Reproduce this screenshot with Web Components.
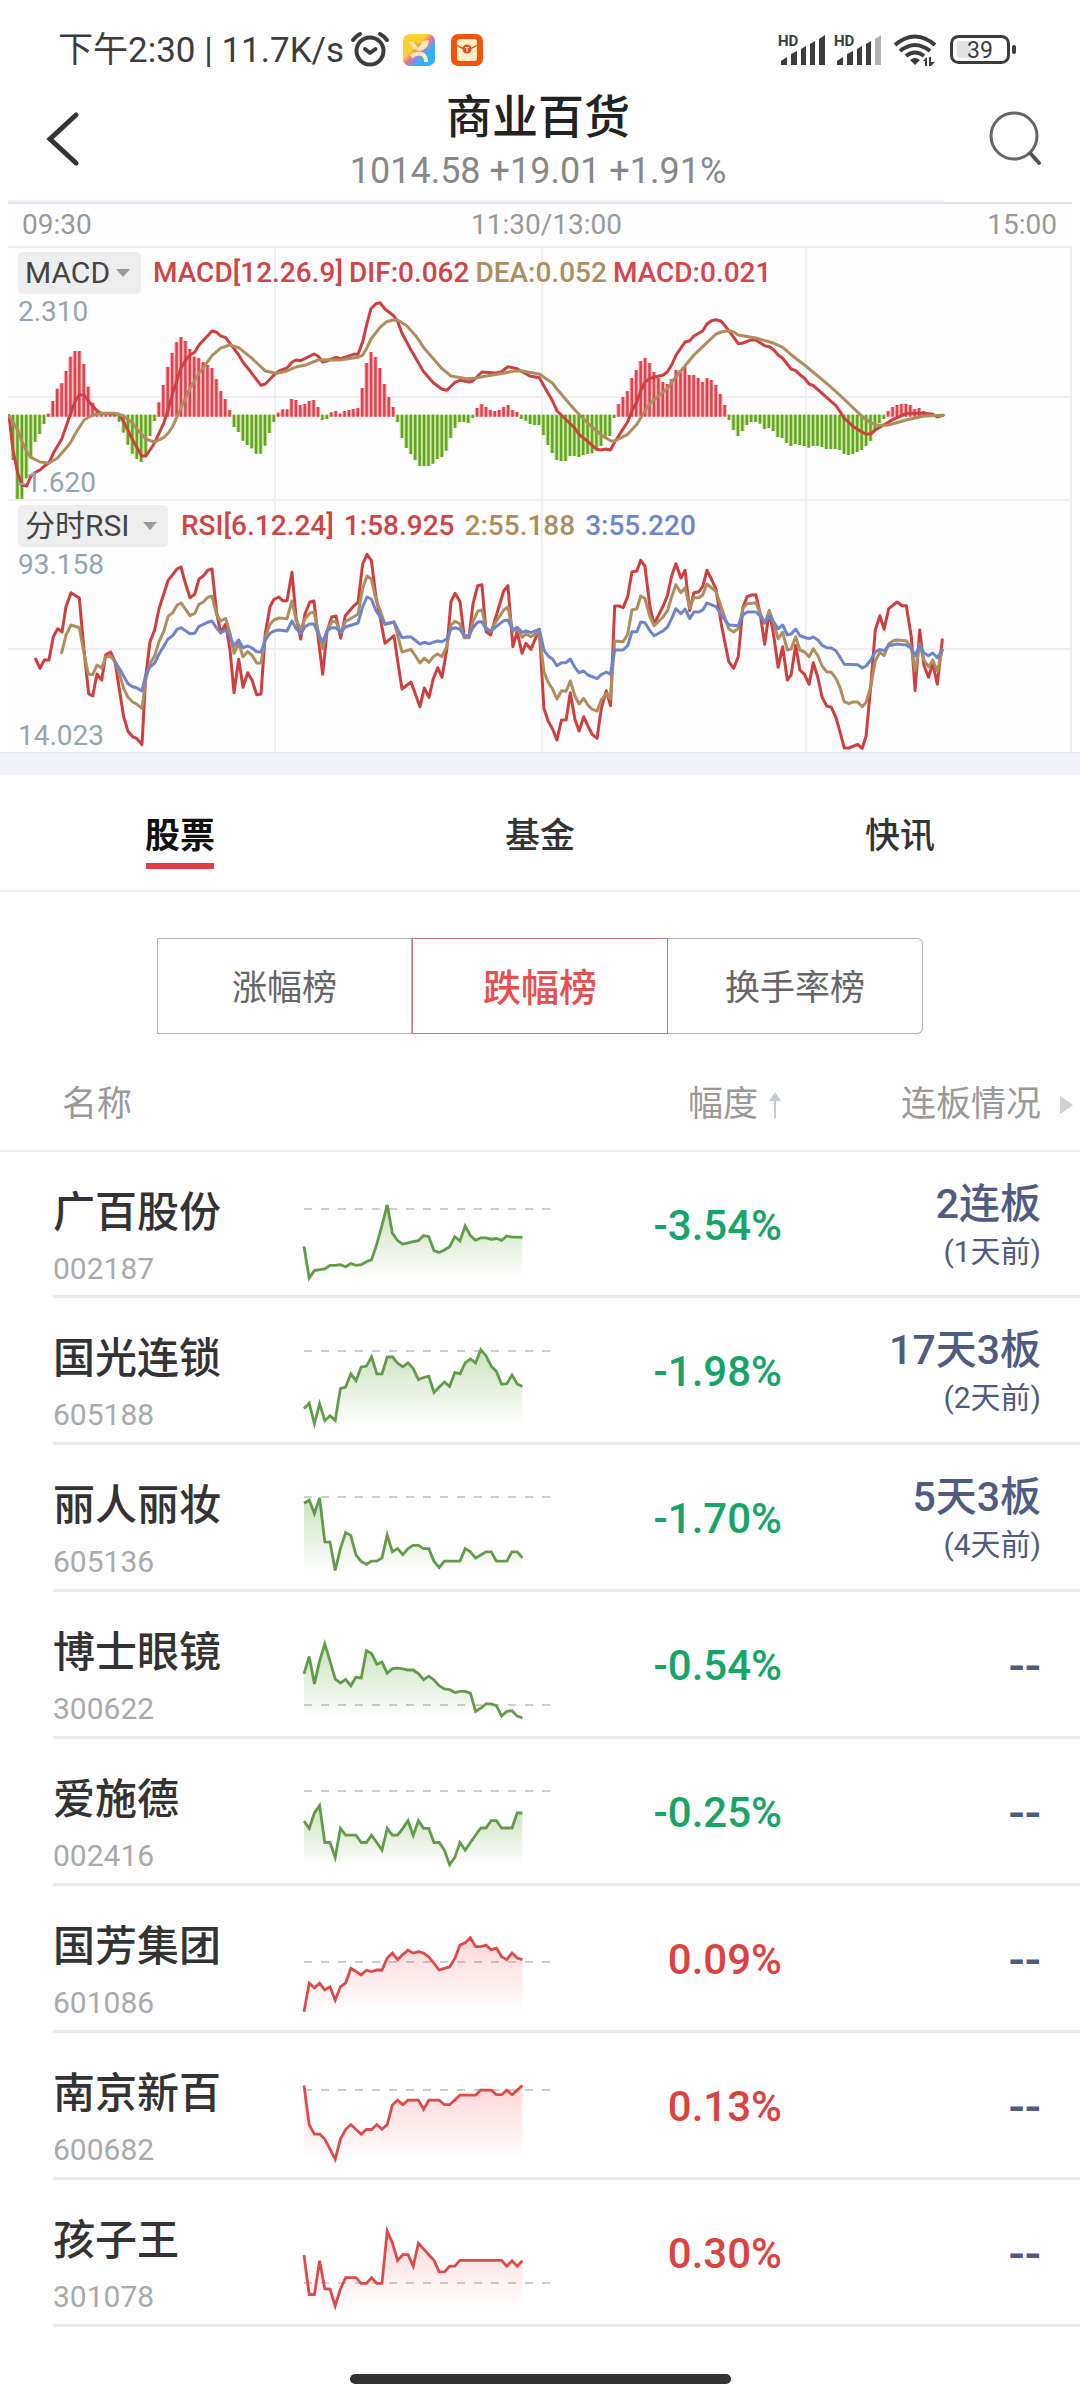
<!DOCTYPE html>
<html lang="zh-CN">
<head>
<meta charset="utf-8">
<meta name="viewport" content="width=device-width, initial-scale=1">
<title>商业百货</title>
<style>
body { margin: 0; background: #fefefe; font-family: Roboto, "Noto Sans CJK SC", sans-serif; color: #333; }
</style>
</head>
<body>
<sector-page></sector-page>

<script>
const define = (name, html, setup) => {
  const tpl = document.createElement('template');
  tpl.innerHTML = '<style>*{box-sizing:border-box}button,select{font:inherit;color:inherit;background:none;border:0;margin:0;padding:0;appearance:none}svg{display:block}</style>' + html;
  customElements.define(name, class extends HTMLElement {
    constructor() {
      super();
      this.attachShadow({ mode: 'open' }).append(tpl.content.cloneNode(true));
    }
    connectedCallback() { if (setup) setup(this, this.shadowRoot); }
  });
};

/* ---------- status bar ---------- */
define('status-bar', `
<style>
:host { display: flex; align-items: center; justify-content: space-between; box-sizing: border-box; height: 72px; padding: 30px 62px 0 58px; color: #3c3c3c; font-size: 35px; line-height: 42px; }
div { display: flex; align-items: center; }
.l svg { margin-left: 6px; }
text { font-family: Roboto, sans-serif; fill: #3c3c3c; }
</style>
<div class="l"><span>下午2:30 | 11.7K/s</span>
<svg width="136" height="40" viewBox="350 32 136 40">
  <g fill="none" stroke="#3c3c3c" stroke-width="4" stroke-linecap="round" stroke-linejoin="round">
    <circle cx="370" cy="52" r="13.5"/><path d="M365 50l5 4 5.500-4M353 41q3-4 7-6M387 41q-3-4-7-6"/>
  </g>
  <defs><linearGradient id="a" x1="0" y1="0" x2="1" y2="1"><stop offset=".38" stop-color="#ffd12e"/><stop offset=".5" stop-color="#ee6f8c"/><stop offset=".58" stop-color="#8d8be0"/><stop offset=".7" stop-color="#2fb4f3"/></linearGradient></defs>
  <rect x="403" y="35" width="32" height="32" rx="7" fill="url(#a)"/>
  <path d="M410 43q4 1 8 4 5-5 10-5-1 8-8 9-7-1-10-8z" fill="#ffe9b8" stroke="#fbe0a0" stroke-width="2" stroke-linejoin="round"/>
  <path d="M411 58q5-5 11-3 4 2 4 8" fill="none" stroke="#ffe9b8" stroke-width="4"/>
  <path d="M415 43l3 4 3-3" fill="none" stroke="#f3a23c" stroke-width="2"/>
  <rect x="451" y="35" width="32" height="32" rx="7" fill="#f2540c"/>
  <rect x="457" y="40" width="20" height="22" rx="3" fill="#ffedc4"/>
  <path d="M457 46q10 8 20 0" fill="none" stroke="#d8541c" stroke-width="1.500"/>
  <circle cx="467" cy="50" r="4.500" fill="#d8541c"/><path d="M465 48.500h4M467 48.500v4" stroke="#fff" stroke-width="1.200"/>
</svg></div>
<svg width="240" height="40" viewBox="778 32 240 40">
  <text x="778" y="47" font-size="15" font-weight="700">HD</text>
  <text x="834" y="47" font-size="15" font-weight="700">HD</text>
  <g fill="#3c3c3c">
    <path d="M781 66v-4l6-4v8zM791 66v-11l6-3v14zM801 66v-16l5-3v19zM810 66v-21l5-3v24zM819 66v-26l6-4v30z"/>
    <path d="M837 66v-4l6-4v8zM847 66v-11l6-3v14zM857 66v-16l5-3v19zM866 66v-21l5-3v24z"/>
    <path d="M875 66v-26l6-4v30z" fill="#b2b2b2"/>
    <path d="M915 66l-5-5q5-4 10 0z"/>
    <path d="M923 62l4-4v9h-2v-5zM929 58h2v5h4l-4 4h-2z"/>
  </g>
  <g fill="none" stroke="#3c3c3c" stroke-width="4">
    <path d="M895 46q20-17 40 0M900 52q15-12 30 0M906 57q9-7 18 0"/>
  </g>
  <rect x="957" y="42" width="14" height="17" rx="2" fill="#e2e2e2"/>
  <rect x="951.500" y="37.500" width="57" height="26" rx="7" fill="none" stroke="#3c3c3c" stroke-width="3"/>
  <rect x="1012" y="46" width="4" height="9" rx="2" fill="#3c3c3c"/>
  <text x="980" y="59" font-size="23" text-anchor="middle">39</text>
</svg>`);

/* ---------- title bar ---------- */
define('nav-bar', `
<style>
:host { display: flex; justify-content: space-between; box-sizing: border-box; height: 128px; padding: 0 44px 0 40px; }
button { height: 134px; width: 48px; }
.t { text-align: center; padding-top: 15px; }
h1 { margin: 0; font-size: 46px; line-height: 60px; font-weight: 500; color: #222; }
p { margin: 0; font-size: 36px; line-height: 48px; color: #888; }
</style>
<button aria-label="返回"><svg width="48" height="60" viewBox="40 109 48 60"><path d="M76 115L50 139l26 24" fill="none" stroke="#333" stroke-width="5" stroke-linecap="round"/></svg></button>
<div class="t"><h1><slot name="title"></slot></h1><p><slot></slot></p></div>
<button aria-label="搜索"><svg width="54" height="60" viewBox="988 109 54 60"><circle cx="1014" cy="136" r="23" fill="none" stroke="#666" stroke-width="3"/><path d="M1031 154l8 9" stroke="#555" stroke-width="4" stroke-linecap="round"/></svg></button>`);

/* ---------- time axis ---------- */
define('time-axis', `
<style>
:host { display: block; margin: 0 8px; background: #fdfdfd; }
.e { height: 2px; width: 88%; background: #edf2fa; }
.r { border-top: 2px solid #e3e7ec; display: grid; grid-template-columns: 1fr auto 1fr; padding: 0 15px 0 14px; font-size: 28px; line-height: 42px; color: #999; }
.r span:nth-child(2) { padding-left: 14px; }
.r span:last-child { text-align: right; }
</style>
<div class="e"></div><div class="r"><span>09:30</span><span>11:30/13:00</span><span>15:00</span></div>`);

/* ---------- indicator panel ---------- */
define('indicator-panel', `
<style>
:host { display: grid; height: 253px; margin: 0 8px; background: #fdfdfd; font-size: 28px; }
:host > * { grid-area: 1 / 1; min-width: 0; }
* { min-width: 0; }
svg.c, .o { grid-area: 1 / 1; }
.o { display: flex; flex-direction: column; align-items: flex-start; padding: 6px 0 0 10px; }
.g { display: flex; align-items: center; gap: var(--gap); line-height: 42px; font-weight: 500; height: 42px; white-space: nowrap; }
label { display: grid; align-items: center; background: #eee; border-radius: 5px; margin-right: var(--lead); font-weight: 400; color: #444; font-size: 30px; }
label > * { grid-area: 1 / 1; }
select { width: var(--chip); height: 42px; padding-left: 7px; line-height: 42px; }
label svg { justify-self: end; margin-right: 11px; pointer-events: none; }
.v { color: #95a5b0; line-height: 32px; }
.hi { padding-top: 2px; }
.lo { margin-top: auto; }
svg.c { width: 100%; height: 253px; }
</style>
<svg class="c" preserveAspectRatio="none"></svg>
<div class="o">
  <div class="g"><label><select aria-label="指标"></select><svg width="14" height="8" viewBox="0 0 14 8"><path d="M0 0h14L7 8z" fill="#999"/></svg></label><slot></slot></div>
  <span class="v hi"></span><span class="v lo"></span>
</div>`, (el, root) => {
  const d = CHARTS[el.getAttribute('kind')];
  root.querySelector('select').innerHTML = '<option>' + el.getAttribute('name') + '</option>';
  root.querySelector('.hi').textContent = el.getAttribute('hi');
  root.querySelector('.lo').textContent = el.getAttribute('lo');
  const svg = root.querySelector('.c');
  svg.setAttribute('viewBox', `8 ${d.top} 1064 253`);
  let s = `<g stroke="#efeff1" stroke-width="2"><path d="M275 ${d.top}v253M542 ${d.top}v253M806 ${d.top}v253M1071 ${d.top}v253M8 ${d.top + 1}h1064M8 ${d.mid}h1064"/></g>`;
  if (d.bars) {
    const x = i => 8.6 + 4.42 * i;
    let wide = '', thin = '';
    d.bars.forEach((v, i) => {
      const up = v < 527, y = d.y0 + v / 3, base = up ? 416.7 : 414.7;
      wide += `<path d="M${x(i)} ${base}V${y}" stroke="${up ? '#ffb0b4' : '#c2e895'}" stroke-width="4.5"/>`;
      thin += `<path d="M${x(i)} ${base}V${y}" stroke="${up ? '#d8434f' : '#65a126'}" stroke-width="2.4"/>`;
    });
    s += wide + thin;
  }
  for (const [color, a, b] of d.lines) {
    const p = (t, x0, k) => t.trim().split(' ').map(q => { const [x, y] = q.split(','); return (x0 + x / k).toFixed(1) + ',' + (d.y0 + y / 3).toFixed(1); }).join(' ');
    s += `<polyline fill="none" stroke="${color}" stroke-width="3" stroke-linejoin="round" stroke-linecap="round" points="${p(a, 0, 3)} ${p(b, 480, 2.613)}"/>`;
  }
  svg.innerHTML = s;
});

/* Two-part traces: the first list covers the morning, the second the afternoon. */
const CHARTS = {
  macd: { top: 246, mid: 397, y0: 240,
    bars: [527,660,781,781,715,655,606,582,552,521,483,446,430,393,350,333,333,372,440,488,508,518,521,516,516,545,578,614,641,657,666,645,588,543,487,435,381,339,306,291,303,327,350,354,366,375,384,417,453,477,510,561,576,602,615,625,641,641,617,579,546,518,508,508,477,480,495,492,483,480,501,540,537,517,513,521,513,510,507,504,444,369,336,351,384,432,471,501,546,594,624,642,660,678,678,678,671,657,651,632,594,564,546,546,549,534,504,492,501,510,513,510,501,495,510,516,537,542,552,555,555,585,615,639,660,663,663,648,648,651,645,642,640,630,618,597,588,534,492,471,453,414,390,363,354,369,396,414,426,432,417,390,390,381,405,405,414,426,414,420,435,462,495,540,570,588,573,555,546,546,551,567,564,573,591,594,609,618,612,615,618,623,618,618,621,627,627,627,630,642,645,642,636,630,618,603,570,549,537,513,501,495,492,492,495,507,504,513,519,521,524,523],
    lines: [
      ['#cf3f40', '27,527 39,630 53,700 66,735 80,738 93,708 107,697 120,690 133,678 147,668 160,640 185,597 198,560 212,520 225,485 238,465 252,465 265,483 278,497 291,513 304,520 357,523 371,545 398,600 425,648 438,648 464,608 477,580 491,550 504,510 518,460 531,420 543,385 557,360 570,345 584,337 597,315 636,273 650,277 662,288 677,293 690,310 716,345 729,367 743,384 783,436 796,432 822,405 837,393 861,384 876,367 888,360 902,362 942,342 954,348 968,366 980,363 1008,352 1022,356 1061,343 1074,343 1088,305 1101,250 1113,206 1128,191 1140,188 1155,207 1182,228 1194,247 1206,280 1233,330 1270,394 1300,428 1326,448 1341,451 1365,427 1380,421 1407,426 1419,422',
       '5,396 40,399 55,396 73,380 97,386 130,408 155,413 190,484 201,512 248,565 259,583 282,605 305,628 317,630 329,627 341,630 352,606 386,545 397,512 410,485 420,453 431,426 444,415 479,405 490,395 501,375 512,346 524,326 536,306 548,302 559,288 582,273 593,252 605,242 617,239 630,244 641,258 675,311 687,309 710,299 721,300 744,317 756,320 768,330 779,345 791,355 813,387 825,392 836,404 848,415 860,432 871,437 930,497 940,513 951,534 976,560 999,577 1009,582 1021,582 1033,570 1080,538 1114,520 1160,520 1183,523 1195,531 1210,526'],
      ['#ae8e5f', '27,527 53,570 66,605 80,635 93,652 120,666 147,669 172,655 198,625 212,607 225,583 252,540 278,525 304,520 344,520 370,527 398,550 411,567 438,598 464,606 491,593 504,580 518,560 531,530 570,445 597,400 636,347 662,324 690,315 716,323 756,355 796,393 830,400 861,393 888,381 920,374 954,360 980,359 1020,360 1074,352 1088,345 1101,323 1113,297 1140,262 1160,245 1182,239 1194,241 1220,257 1247,287 1273,325 1326,386 1353,408 1400,416 1430,414',
       '5,410 50,402 90,393 110,393 155,402 190,430 201,447 248,510 282,550 317,585 341,602 352,603 386,583 410,553 431,513 444,490 490,445 512,410 536,377 559,345 582,320 617,282 630,276 651,272 663,276 675,285 721,294 768,310 791,322 813,344 848,375 906,430 940,465 999,530 1021,548 1040,556 1065,556 1114,540 1160,528 1210,526']
    ] },
  rsi: { top: 499, mid: 649, y0: 490,
    lines: [
      ['#cf3f40', '107,507 120,535 133,510 147,510 160,440 173,416 186,426 198,350 213,308 238,324 252,480 266,612 278,618 291,552 305,570 317,494 332,486 345,515 371,680 384,724 398,740 411,746 426,764 437,560 450,455 464,420 477,356 504,272 531,237 543,231 557,283 570,323 584,313 597,267 610,258 623,241 636,237 650,370 662,428 677,402 690,480 702,608 716,508 729,592 743,548 756,570 770,614 783,612 796,430 810,350 822,328 837,321 848,332 861,332 876,247 888,380 902,447 915,372 929,337 942,333 954,440 968,553 981,425 995,381 1008,378 1022,445 1036,377 1061,348 1074,337 1088,222 1101,193 1114,211 1128,320 1140,380 1155,460 1182,437 1194,520 1206,597 1233,576 1260,650 1273,594 1287,622 1300,566 1313,533 1326,562 1340,480 1353,335 1365,310 1380,335 1393,442 1407,442 1419,342 1433,287',
       '5,284 16,425 28,435 39,390 62,303 73,287 86,470 97,425 110,490 120,460 133,478 155,418 167,655 178,693 190,718 201,750 213,690 225,690 236,608 248,688 259,723 271,680 282,708 293,733 306,745 317,655 330,602 341,647 352,348 363,348 374,353 386,320 397,246 410,243 420,211 431,228 444,350 455,402 467,375 479,347 490,316 501,257 512,221 525,264 536,241 548,362 559,308 572,305 582,290 593,241 605,268 617,298 630,400 650,515 663,535 675,500 687,352 698,320 710,315 721,314 732,370 744,463 756,362 768,440 779,532 791,470 803,570 813,555 825,466 836,540 848,553 860,583 871,518 883,563 894,622 906,648 918,652 930,682 940,722 952,774 964,774 987,763 999,775 1009,738 1021,590 1033,420 1045,377 1056,418 1068,356 1090,336 1103,347 1114,347 1127,440 1137,602 1149,420 1160,525 1172,562 1183,520 1195,583 1208,449'],
      ['#ae8e5f', '185,488 198,435 213,405 238,413 252,490 265,552 278,554 291,525 305,534 317,500 332,499 345,515 358,550 371,595 384,622 398,636 411,643 426,655 437,570 450,520 464,497 477,455 491,425 504,380 518,368 531,346 543,339 557,358 570,377 584,370 597,343 610,336 623,322 636,319 650,375 662,393 677,385 690,430 702,490 716,460 729,500 743,485 756,496 770,519 783,519 796,440 810,403 822,390 837,384 861,386 876,333 888,390 902,418 915,386 929,370 942,366 954,420 968,477 981,425 995,395 1008,395 1022,428 1036,395 1074,373 1088,295 1101,258 1114,267 1128,330 1140,360 1155,403 1182,396 1194,440 1206,486 1220,482 1233,478 1260,519 1273,504 1287,517 1300,500 1313,492 1326,500 1340,470 1353,405 1365,394 1380,402 1393,443 1407,443 1419,395 1433,364',
       '5,360 16,415 28,425 39,400 62,360 73,351 86,425 97,413 110,442 120,432 133,440 155,425 167,545 178,577 190,598 201,627 213,602 225,604 236,573 248,618 259,642 271,625 282,645 293,658 306,663 317,630 330,610 341,627 352,453 374,455 386,433 397,360 410,356 420,318 431,325 444,380 455,407 479,380 490,362 501,320 512,284 525,308 536,293 548,355 559,323 572,323 582,315 593,282 617,305 630,350 650,417 663,426 675,415 687,355 698,341 721,338 732,370 744,400 756,362 768,400 779,446 791,427 803,480 813,477 825,440 836,480 848,486 860,500 871,476 883,497 894,528 906,545 918,547 930,565 940,590 952,635 964,641 975,636 987,636 999,650 1009,637 1021,590 1033,512 1045,487 1056,497 1068,462 1080,452 1090,450 1114,452 1127,475 1137,542 1149,463 1160,510 1172,530 1183,510 1195,543 1208,480'],
      ['#6e85cc', '345,515 358,535 384,581 398,590 411,594 426,603 437,555 450,530 464,519 477,492 504,447 518,437 531,418 543,413 570,431 584,430 597,409 623,397 636,393 650,415 662,428 677,420 690,440 702,468 716,450 729,473 743,468 756,474 770,485 783,486 796,450 810,430 822,423 837,420 861,423 876,393 888,415 902,431 915,410 929,402 942,402 954,430 968,457 981,422 995,413 1008,413 1022,428 1036,411 1074,399 1088,350 1101,321 1114,327 1128,362 1155,402 1182,396 1194,420 1206,443 1220,441 1233,441 1260,462 1273,457 1287,461 1313,453 1326,455 1340,447 1353,417 1365,413 1380,418 1393,437 1407,437 1419,413 1433,396',
       '5,395 16,418 28,422 39,413 62,392 73,390 86,420 97,412 110,427 120,423 133,428 155,418 167,480 178,498 190,508 201,527 213,518 225,518 236,507 248,532 259,548 271,543 282,555 306,566 317,554 330,546 341,553 352,480 374,480 386,467 397,425 410,425 420,396 431,398 444,422 455,437 479,422 490,411 501,385 512,356 525,371 536,357 548,386 559,366 572,366 582,360 593,339 617,350 630,375 650,405 675,407 687,375 698,366 721,366 732,378 744,397 756,377 779,416 791,405 803,435 813,432 825,417 836,437 860,446 871,441 883,450 894,466 906,473 918,474 930,482 940,500 952,523 987,524 999,534 1009,528 1021,510 1033,486 1045,478 1056,482 1068,467 1090,462 1114,465 1127,475 1137,497 1149,468 1160,488 1172,497 1183,489 1195,503 1208,480']
    ] }
};

/* ---------- tabs ---------- */
define('section-tabs', `
<style>
:host { display: grid; grid-template-columns: repeat(3, 1fr); box-sizing: border-box; height: 117px; border-bottom: 2px solid #efefef; }
button { display: grid; justify-items: center; align-content: start; padding-top: 36px; font-size: 35px; line-height: 52px; font-weight: 500; color: #333; }
button[aria-selected=true] { font-weight: 700; color: #111; }
button[aria-selected=true]::after { content: ""; width: 68px; height: 6px; background: #e23c46; }
</style>
<button role="tab" aria-selected="true">股票</button><button role="tab">基金</button><button role="tab">快讯</button>`);

define('rank-switch', `
<style>
:host { display: grid; grid-template-columns: repeat(3, 1fr); width: 71%; height: 96px; margin: 46px auto 0; }
button { border: 1px solid #b3b3b3; font-size: 35px; color: #666; padding-bottom: 3px; }
button:first-child { border-radius: 6px 0 0 6px; border-right: 0; }
button:last-child { border-radius: 0 6px 6px 0; border-left: 0; }
button[aria-pressed=true] { border-color: #c4787c; color: #e8504f; font-size: 38px; font-weight: 500; }
</style>
<button>涨幅榜</button><button aria-pressed="true">跌幅榜</button><button>换手率榜</button>`);

/* ---------- sparkline ---------- */
define('spark-line', `<style>:host { display: block; } svg { width: 246px; height: 144px; overflow: visible; }</style><svg viewBox="0 0 246 144"></svg>`, (el, root) => {
  const s = STOCKS[el.getAttribute('row')], k = +el.getAttribute('row');
  const y = v => (k < 4 ? 19 + v / 2.8 : 579 + v / 2.613) - 147 * k;
  const ys = s.line.map(y), low = Math.max(...ys), high = Math.min(...ys), c = s.up ? '#dc4a4a' : '#629c4a';
  const pts = ys.map((v, i) => `${(i * 5.2).toFixed(1)} ${v.toFixed(1)}`).join('L');
  root.querySelector('svg').innerHTML = `<defs><linearGradient id="g" gradientUnits="userSpaceOnUse" x1="0" x2="0" y1="${high}" y2="${low}"><stop stop-color="${s.up ? '#ff5a5a' : '#6fb04e'}" stop-opacity="${s.up ? .24 : .36}"/><stop offset="1" stop-color="${s.up ? '#ff5a5a' : '#6fb04e'}" stop-opacity="0"/></linearGradient></defs>
  <path d="M0 ${Math.round(y(s.base))}H246" stroke="#9c9c9c" stroke-width="1.2" stroke-dasharray="8 9"/>
  <path d="M${pts}L218.4 ${low}L0 ${low}Z" fill="url(#g)"/><path d="M${pts}" fill="none" stroke="${c}" stroke-width="2.8"/>`;
});

const flat = n => Array(n).fill(1386);
const STOCKS = [
  { name: '广百股份', code: '002187', pct: '-3.54%', board: '2连板', ago: '(1天前)', base: 107, line: [211,300,279,276,274,264,264,262,268,259,264,262,254,248,205,152,95,174,195,205,201,198,195,181,184,223,228,221,212,184,196,154,181,194,187,187,191,189,194,182,185,185,186] },
  { name: '国光连锁', code: '605188', pct: '-1.98%', board: '17天3板', ago: '(2天前)', base: 506, line: [668,653,710,655,702,688,701,612,608,571,590,552,549,523,571,571,524,523,541,551,540,556,587,581,577,623,608,594,606,567,571,540,529,540,503,520,549,564,600,598,574,599,606] },
  { name: '丽人丽妆', code: '605136', pct: '-1.70%', board: '5天3板', ago: '(4天前)', base: 915, line: [933,924,962,918,1041,1042,1121,1060,1015,1023,1078,1096,1104,1095,1095,1086,1022,1069,1060,1077,1060,1051,1051,1060,1060,1096,1113,1095,1095,1095,1095,1060,1069,1087,1078,1069,1069,1095,1095,1095,1069,1069,1086] },
  { name: '博士眼镜', code: '300622', pct: '-0.54%', base: 1499, line: [1411,1362,1439,1375,1327,1375,1425,1436,1426,1444,1420,1423,1346,1354,1384,1378,1409,1396,1395,1397,1400,1400,1410,1427,1417,1428,1444,1453,1455,1463,1460,1460,1465,1516,1507,1495,1495,1500,1529,1516,1514,1529,1534] },
  { name: '爱施德', code: '002416', pct: '-0.25%', base: 159, line: [238,257,217,197,294,294,333,257,275,275,275,294,294,275,294,314,257,275,275,257,237,276,237,257,257,294,294,314,352,333,294,314,294,275,256,256,237,237,256,256,256,217,217] },
  { name: '国芳集团', code: '601086', pct: '0.09%', up: true, base: 605, line: [736,662,674,662,679,671,706,671,661,623,631,640,628,631,627,627,596,583,600,587,575,583,579,583,593,610,627,623,619,597,562,556,543,566,566,562,574,570,592,600,583,596,600] },
  { name: '南京新百', code: '600682', pct: '0.13%', up: true, base: 940, line: [929,1031,1056,1056,1069,1095,1122,1069,1044,1031,1044,1056,1044,1044,1031,1043,1031,980,967,979,967,967,967,991,967,967,967,979,979,967,954,954,954,954,941,941,941,953,953,941,953,941,929] },
  { name: '孩子王', code: '301078', pct: '0.30%', up: true, base: 1446, line: [1372,1475,1475,1387,1460,1461,1505,1461,1431,1431,1431,1446,1446,1431,1446,1446,1310,1340,1386,1371,1371,1401,1341,1356,1371,1386,1416,1416,1401,1401,...flat(9),1401,1387,1401,1387] }
];

/* ---------- stock table ---------- */
define('stock-table', `
<style>
:host { display: block; }
table { width: 100%; border-collapse: collapse; table-layout: fixed; }
.n { width: 304px; } .p { width: 230px; } .b { width: 298px; }
th { height: 117px; padding: 25px 0 0; font-size: 35px; line-height: 48px; font-weight: 400; color: #999; text-align: right; border-bottom: 2px solid #efefef; }
th:first-child { text-align: left; padding-left: 62px; }
th button { display: inline-flex; align-items: center; }
th svg { flex: none; }
.sort { gap: 10px; } .more { gap: 19px; margin-right: 7px; }
td { height: 147px; padding: 0; vertical-align: top; text-align: right; font-weight: 500; }
tbody tr { background: linear-gradient(#ececec, #ececec) 53px 100% / 100% 3px no-repeat; }
td:first-child { text-align: left; padding: 35px 0 0 53px; }
.name { font-size: 42px; line-height: 52px; color: #333; }
.code { font-size: 30px; line-height: 32px; margin-top: 14px; color: #aaa; font-weight: 400; }
.pct { font-size: 42px; line-height: 50px; padding-top: 49px; color: #17a567; }
.pct.up { color: #dc4340; }
.board { color: #4f5b80; padding-right: 39px; }
.board div { font-size: 41px; line-height: 50px; padding-top: 27px; }
.board small { display: block; font-size: 30px; line-height: 36px; padding-top: 5px; font-weight: 400; }
.board .none { padding-top: 49px; font-size: 48px; }
</style>
<table><colgroup><col class="n"><col><col class="p"><col class="b"></colgroup>
<thead><tr><th>名称</th><th></th>
<th><button class="sort">幅度<svg width="14" height="28" viewBox="0 0 14 28"><path d="M7 6v21" stroke="#c3ccd4" stroke-width="2"/><path d="M1 10L7 1l6 9z" fill="#c3ccd4"/></svg></button></th>
<th><button class="more">连板情况<svg width="13" height="18" viewBox="0 0 13 18"><path d="M0 0l13 9L0 18z" fill="#d2d2d2"/></svg></button></th></tr></thead>
<tbody></tbody></table>`, (el, root) => {
  root.querySelector('tbody').innerHTML = STOCKS.map((s, i) => `<tr>
    <td><div class="name">${s.name}</div><div class="code">${s.code}</div></td>
    <td><spark-line row="${i}"></spark-line></td>
    <td class="pct${s.up ? ' up' : ''}">${s.pct}</td>
    <td class="board">${s.board ? `<div>${s.board}</div><small>${s.ago}</small>` : '<div class="none">--</div>'}</td></tr>`).join('');
});

/* ---------- page ---------- */
define('sector-page', `
<style>
:host { display: flex; flex-direction: column; min-height: 100vh; }
.red { color: #cf4444; } .red2 { color: #d9434b; } .tan { color: #ae8e5f; } .blue { color: #6e85cc; }
.band { height: 23px; background: #f3f4f9; border-top: 1px solid #e8e8ec; }
.home { width: 381px; height: 10px; border-radius: 5px; background: #333; margin: auto auto 16px; }
</style>
<status-bar></status-bar>
<nav-bar><span slot="title">商业百货</span>1014.58 +19.01 +1.91%</nav-bar>
<time-axis></time-axis>
<indicator-panel kind="macd" name="MACD" hi="2.310" lo="-1.620" style="--chip:123px;--gap:6px;--lead:6px">
  <span class="red">MACD[12.26.9]</span><span class="red">DIF:0.062</span><span class="tan">DEA:0.052</span><span class="red2">MACD:0.021</span>
</indicator-panel>
<indicator-panel kind="rsi" name="分时RSI" hi="93.158" lo="14.023" style="--chip:150px;--gap:10px;--lead:3px">
  <span class="red">RSI[6.12.24]</span><span class="red">1:58.925</span><span class="tan">2:55.188</span><span class="blue">3:55.220</span>
</indicator-panel>
<div class="band"></div>
<section-tabs></section-tabs>
<rank-switch></rank-switch>
<stock-table></stock-table>
<div class="home"></div>`);
</script>
</body>
</html>
